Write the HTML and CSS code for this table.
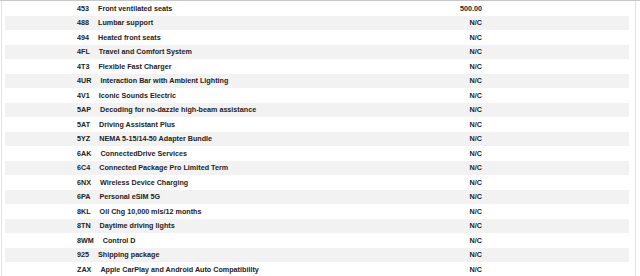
FILE: index.html
```html
<!DOCTYPE html>
<html>
<head>
<meta charset="utf-8">
<link rel="stylesheet" href="styles.css">
</head>
<body>
<div class="frame">
  <div class="list">
    <div class="row"><span class="desc"><span class="code">453</span>Front ventilated seats</span><span class="price">500.00</span></div>
    <div class="row"><span class="desc"><span class="code">488</span>Lumbar support</span><span class="price">N/C</span></div>
    <div class="row"><span class="desc"><span class="code">494</span>Heated front seats</span><span class="price">N/C</span></div>
    <div class="row"><span class="desc"><span class="code">4FL</span>Travel and Comfort System</span><span class="price">N/C</span></div>
    <div class="row"><span class="desc"><span class="code">4T3</span>Flexible Fast Charger</span><span class="price">N/C</span></div>
    <div class="row"><span class="desc"><span class="code">4UR</span>Interaction Bar with Ambient Lighting</span><span class="price">N/C</span></div>
    <div class="row"><span class="desc"><span class="code">4V1</span>Iconic Sounds Electric</span><span class="price">N/C</span></div>
    <div class="row"><span class="desc"><span class="code">5AP</span>Decoding for no-dazzle high-beam assistance</span><span class="price">N/C</span></div>
    <div class="row"><span class="desc"><span class="code">5AT</span>Driving Assistant Plus</span><span class="price">N/C</span></div>
    <div class="row"><span class="desc"><span class="code">5YZ</span>NEMA 5-15/14-50 Adapter Bundle</span><span class="price">N/C</span></div>
    <div class="row"><span class="desc"><span class="code">6AK</span>ConnectedDrive Services</span><span class="price">N/C</span></div>
    <div class="row"><span class="desc"><span class="code">6C4</span>Connected Package Pro Limited Term</span><span class="price">N/C</span></div>
    <div class="row"><span class="desc"><span class="code">6NX</span>Wireless Device Charging</span><span class="price">N/C</span></div>
    <div class="row"><span class="desc"><span class="code">6PA</span>Personal eSIM 5G</span><span class="price">N/C</span></div>
    <div class="row"><span class="desc"><span class="code">8KL</span>Oil Chg 10,000 mls/12 months</span><span class="price">N/C</span></div>
    <div class="row"><span class="desc"><span class="code">8TN</span>Daytime driving lights</span><span class="price">N/C</span></div>
    <div class="row"><span class="desc"><span class="code">8WM</span>Control D</span><span class="price">N/C</span></div>
    <div class="row"><span class="desc"><span class="code">925</span>Shipping package</span><span class="price">N/C</span></div>
    <div class="row"><span class="desc"><span class="code">ZAX</span>Apple CarPlay and Android Auto Compatibility</span><span class="price">N/C</span></div>
  </div>
</div>
</body>
</html>
```

FILE: styles.css
```css
html, body {
  margin: 0;
  padding: 0;
  background: #ffffff;
}
body {
  font-family: "Liberation Sans", Arial, sans-serif;
  font-weight: bold;
  font-size: 7.2px;
  color: #222222;
}
.frame {
  border-top: 1px solid #c8c8c8;
  padding: 0 4px 0 1px;
  height: 275px;
  overflow: hidden;
}
.list {
  border-left: 1px solid #e2e2e2;
  border-right: 1px solid #e2e2e2;
  padding: 0 6px 0 3px;
  height: 100%;
}
.row {
  display: flex;
  align-items: center;
  height: 14.5px;
}
.row:nth-child(even) {
  background: #f2f2f2;
}
.desc {
  flex: 1;
  padding-left: 72px;
  white-space: nowrap;
}
.code {
  margin-right: 9px;
}
.price {
  width: 60px;
  margin-right: 147px;
  text-align: right;
}
```
